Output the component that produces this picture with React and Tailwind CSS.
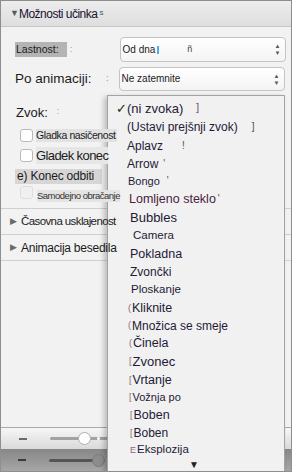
import React from 'react';

// each menu row: height, left padding, font size, optional lead/tail marks
const sounds = [
  { t: '(ni zvoka)', h: 'h-[18px]', p: 'pl-[8px]', s: 'text-[13px]', check: true, tail: ']', tailX: 'ml-[13px]' },
  { t: '(Ustavi prejšnji zvok)', h: 'h-[19px]', p: 'pl-[19px]', s: 'text-[12px]', tail: ']', tailX: 'ml-[14px]' },
  { t: 'Aplavz', h: 'h-[19px]', p: 'pl-[19px]', s: 'text-[12px]', tail: '!', tailX: 'ml-[19px]' },
  { t: 'Arrow', h: 'h-[17px]', p: 'pl-[19px]', s: 'text-[12px]', tail: "'", tailX: 'ml-[5px]' },
  { t: 'Bongo', h: 'h-[18px]', p: 'pl-[20px]', s: 'text-[11px]', tail: "'", tailX: 'ml-[7px]' },
  { t: 'Lomljeno steklo', h: 'h-[18px]', p: 'pl-[21px]', s: 'text-[12.5px] text-[#4a1d3e]', tail: "'", tailX: 'ml-[2px]' },
  { t: 'Bubbles', h: 'h-[19px]', p: 'pl-[22px]', s: 'text-[13px]' },
  { t: 'Camera', h: 'h-[18px]', p: 'pl-[25px]', s: 'text-[11.5px]' },
  { t: 'Pokladna', h: 'h-[18px]', p: 'pl-[22px]', s: 'text-[12.5px]' },
  { t: 'Zvončki', h: 'h-[18px]', p: 'pl-[22px]', s: 'text-[12px]' },
  { t: 'Ploskanje', h: 'h-[18px]', p: 'pl-[23px]', s: 'text-[11.5px]' },
  { t: 'Kliknite', h: 'h-[18px]', p: 'pl-[20px]', s: 'text-[12.5px]', lead: '(' },
  { t: 'Množica se smeje', h: 'h-[17px]', p: 'pl-[20px]', s: 'text-[12px]', lead: '(' },
  { t: 'Činela', h: 'h-[18px]', p: 'pl-[21px]', s: 'text-[12.5px]', lead: '(' },
  { t: 'Zvonec', h: 'h-[19px]', p: 'pl-[21px]', s: 'text-[13px]', lead: '[' },
  { t: 'Vrtanje', h: 'h-[18px]', p: 'pl-[21px]', s: 'text-[12.5px]', lead: '[' },
  { t: 'Vožnja po', h: 'h-[17px]', p: 'pl-[21px]', s: 'text-[11px]', lead: '[' },
  { t: 'Boben', h: 'h-[18px]', p: 'pl-[22px]', s: 'text-[12.5px]', lead: '[' },
  { t: 'Boben', h: 'h-[18px]', p: 'pl-[22px]', s: 'text-[12px]', lead: '[' },
  { t: 'Eksplozija', h: 'h-[16px]', p: 'pl-[22px]', s: 'text-[11.5px]', lead: 'E' },
];

function Spinner() {
  return (
    <div className="flex flex-col items-center leading-none text-[6px] text-[#555] mr-[4px]">
      <span>▲</span>
      <span className="mt-[1px]">▼</span>
    </div>
  );
}

function Check({ disabled }) {
  return (
    <div
      className={
        disabled
          ? 'w-[13px] h-[13px] rounded-[3px] border border-[#dedede] bg-[#f0f0f0]'
          : 'w-[13px] h-[13px] rounded-[3px] border border-[#b9b9b9] bg-white'
      }
    />
  );
}

function Slider({ dark }) {
  return (
    <div className="flex items-center">
      <div className={dark ? 'w-[8px] h-[2px] bg-[#3a3a3a] ml-[17px]' : 'w-[8px] h-[2px] bg-[#6a6a6a] ml-[18px]'} />
      <div className={dark ? 'relative ml-[23px] w-[56px] h-[3px] rounded-full bg-[#555]' : 'relative ml-[23px] w-[62px] h-[3px] rounded-full bg-[#a2a2a2]'}>
        {dark ? (
          <div className="absolute left-[43px] top-[-5px] w-[13px] h-[13px] rounded-full bg-[#8c8c8c] border border-[#7a7a7a]" />
        ) : (
          <>
            <div className="absolute left-[28px] top-[-5px] w-[13px] h-[13px] rounded-full bg-white border border-[#b0b0b0]" />
            <div className="absolute left-[47px] top-[0px] w-[3px] h-[3px] rounded-full bg-white" />
          </>
        )}
      </div>
    </div>
  );
}

export default function App() {
  return (
    <div className="relative w-[292px] h-[472px] overflow-hidden border border-[#8e8e8e] bg-[#f2f2f2] flex flex-col font-['Liberation_Sans',Arial,sans-serif] text-[#1b1b1b]">
      {/* header */}
      <div className="h-[26px] shrink-0 flex items-center bg-gradient-to-b from-[#ededed] to-[#dedede] border-b border-[#c6c6c6]">
        <span className="ml-[9px] text-[9px] text-[#5a5a5a]">▼</span>
        <span className="text-[12px] tracking-[-0.5px] text-[#1c1030] leading-none">Možnosti učinka</span>
        <span className="ml-[2px] text-[8px] text-[#555] self-start mt-[6px]">s</span>
      </div>

      {/* Lastnost */}
      <div className="mt-[10px] h-[25px] flex items-center">
        <div className="ml-[14px] w-[52px] h-[15px] bg-[#b4b4b4] flex items-center pl-[1px] text-[10.5px] leading-none">Lastnost:</div>
        <span className="ml-[3px] text-[9px] text-[#9a9a9a]">:</span>
        <div className="ml-[47px] w-[166px] h-[25px] rounded-[4px] border border-[#c4c4c4] bg-gradient-to-b from-[#ffffff] to-[#f4f4f4] flex items-center">
          <span className="ml-[2px] text-[10px] leading-none">Od dna</span>
          <span className="ml-[2px] w-[2px] h-[8px] bg-[#5aa7e8]" />
          <span className="ml-[28px] text-[9px] text-[#444]">ñ</span>
          <div className="flex-1" />
          <Spinner />
        </div>
      </div>

      {/* Po animaciji */}
      <div className="mt-[5px] h-[24px] flex items-center">
        <div className="ml-[14px] w-[85px] text-[13.5px] leading-none">Po animaciji:</div>
        <span className="ml-[6px] text-[9px] text-[#8a8a8a]">:</span>
        <div className="ml-[10px] w-[166px] h-[24px] rounded-[4px] border border-[#c4c4c4] bg-gradient-to-b from-[#ffffff] to-[#f4f4f4] flex items-center">
          <span className="ml-[2px] text-[10px] leading-none">Ne zatemnite</span>
          <div className="flex-1" />
          <Spinner />
        </div>
      </div>

      {/* Zvok */}
      <div className="mt-[12px] h-[18px] flex items-center">
        <span className="ml-[15px] text-[13px] leading-none">Zvok:</span>
        <span className="ml-[9px] text-[9px] text-[#8a8a8a]">:</span>
      </div>

      {/* checkboxes (their labels lie over the open menu) */}
      <div className="mt-[7px] h-[15px] flex items-center">
        <div className="ml-[19px]"><Check /></div>
        <span className="relative z-10 ml-[3px] pr-[1px] bg-[#e2e2e2] text-[10.5px] tracking-[-0.4px] leading-[13px]">Gladka nasičenost</span>
      </div>
      <div className="mt-[4px] h-[17px] flex items-center">
        <div className="ml-[19px]"><Check /></div>
        <span className="relative z-10 ml-[3px] bg-[#e6e6e6] text-[13px] tracking-[-0.6px] leading-[17px]">Gladek konec</span>
      </div>
      <div className="mt-[5px] h-[15px] flex items-center">
        <span className="ml-[14px] pl-[2px] pr-[8px] bg-[#d6d6d6] text-[12px] tracking-[-0.2px] leading-[15px]">e) Konec odbiti</span>
      </div>
      <div className="mt-[2px] h-[16px] flex items-center">
        <div className="ml-[19px] mt-[-4px]"><Check disabled /></div>
        <span className="relative z-10 ml-[4px] mt-[4px] bg-[#e4e4e4] text-[9.5px] tracking-[-0.5px] leading-[12px] text-[#333]">Samodejno obračanje</span>
      </div>

      {/* sections */}
      <div className="mt-[6px] h-[27px] flex items-center border-t border-b border-[#cfcfcf]">
        <span className="ml-[9px] text-[9px] text-[#6a6a6a]">▶</span>
        <span className="relative z-10 ml-[4px] text-[11.5px] tracking-[-0.6px] leading-none">Časovna usklajenost</span>
      </div>
      <div className="h-[26px] flex items-center border-b border-[#cfcfcf]">
        <span className="ml-[9px] text-[9px] text-[#6a6a6a]">▶</span>
        <span className="relative z-10 ml-[4px] text-[12px] tracking-[-0.25px] leading-none">Animacija besedila</span>
      </div>

      <div className="flex-1" />

      {/* bottom bars */}
      <div className="h-[22px] shrink-0 flex items-center border-t border-[#a9a9a9] bg-gradient-to-b from-[#f6f6f6] to-[#dadada]">
        <Slider />
      </div>
      <div className="h-[22px] shrink-0 flex items-center bg-gradient-to-b from-[#878787] to-[#a6a6a6]">
        <Slider dark />
      </div>

      {/* open sound menu */}
      <div className="absolute left-[106px] top-[94px] w-[178px] bottom-[-1px] bg-[#f1f1f1] border border-[#a3a3a3] shadow-[-3px_2px_5px_rgba(0,0,0,0.22)] pt-[3px] flex flex-col text-[#241a36]">
        {sounds.map((it, i) => (
          <div key={i} className={`${it.h} ${it.p} flex items-center whitespace-nowrap`}>
            {it.check && <span className="w-[11px] text-[13px] leading-none text-[#222]">✓</span>}
            {it.lead && <span className="text-[9px] text-[#8a6a70] mr-[1px] leading-none">{it.lead}</span>}
            <span className={`${it.s} leading-none`}>{it.t}</span>
            {it.tail && <span className={`${it.tailX} text-[10px] text-[#6a4060] leading-none`}>{it.tail}</span>}
          </div>
        ))}
        <div className="h-[13px] flex justify-center items-center text-[10px] text-[#222] pr-[4px]">▼</div>
      </div>
    </div>
  );
}
